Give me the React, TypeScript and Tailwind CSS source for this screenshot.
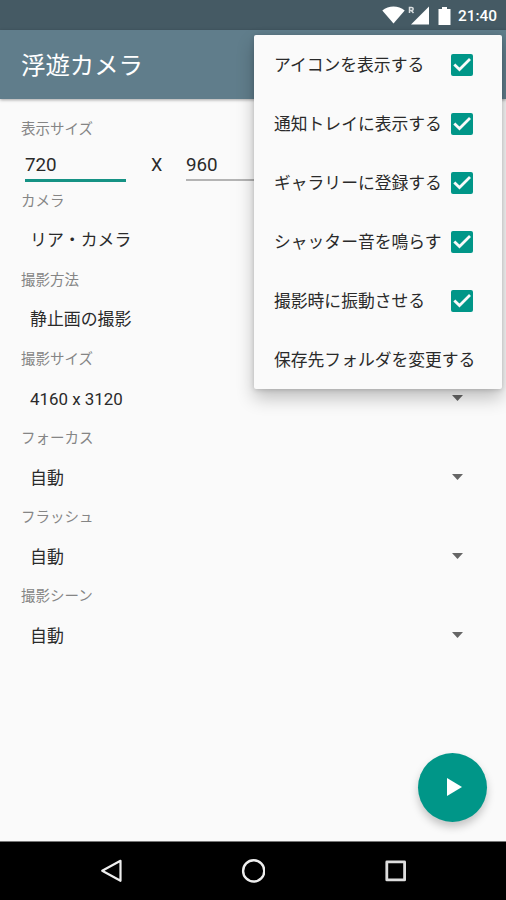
import React, { useState } from 'react';

const initialMenu = [
    { id: 'icon', label: 'アイコンを表示する', checked: true },
    { id: 'tray', label: '通知トレイに表示する', checked: true },
    { id: 'gallery', label: 'ギャラリーに登録する', checked: true },
    { id: 'shutter', label: 'シャッター音を鳴らす', checked: true },
    { id: 'vibrate', label: '撮影時に振動させる', checked: true },
];

const fields = [
    { label: 'カメラ', value: 'リア・カメラ' },
    { label: '撮影方法', value: '静止画の撮影' },
    { label: '撮影サイズ', value: '4160 x 3120' },
    { label: 'フォーカス', value: '自動' },
    { label: 'フラッシュ', value: '自動' },
    { label: '撮影シーン', value: '自動' },
];

function StatusBar() {
    return (
        <div className="flex h-[30px] items-center justify-end bg-[#455a64] pr-[9px] text-white">
            <svg className="h-[18px] w-[23px]" viewBox="0 0 23 18" fill="currentColor">
                <path d="M0.3 4.4C6.5-0.8 16.5-0.8 22.7 4.4L11.5 17.6Z" />
            </svg>
            <svg className="ml-[3px] h-[19px] w-[22px]" viewBox="0 0 22 19" fill="currentColor">
                <path d="M21 0.5V18.5H3Z" />
                <path d="M1.5 7V1.5H3.5Q5.2 1.5 5.2 3Q5.2 4.5 3.5 4.5H1.5M3.3 4.5L5.5 7" fill="none" stroke="currentColor" strokeWidth="1.5" opacity=".8" />
            </svg>
            <svg className="ml-[8px] mt-px h-[18px] w-[13px]" viewBox="0 0 13 18" fill="currentColor">
                <path d="M4 0H9V2H12.5V18H0.5V2H4Z" />
            </svg>
            <span className="ml-[7px] mt-[3px] text-[15.4px] leading-none font-medium">21:40</span>
        </div>
    );
}

function CheckBox({ checked }: { checked: boolean }) {
    if (!checked) {
        return <span className="h-[22px] w-[22px] rounded-[2px] border-2 border-[#757575]" />;
    }
    return (
        <span className="h-[22px] w-[22px] rounded-[2px] bg-[#009688]">
            <svg className="h-full w-full" viewBox="0 0 22 22" fill="none" stroke="#fafafa" strokeWidth="2.8">
                <path d="M3.3 10.4L8.5 15.6L19 5.1" />
            </svg>
        </span>
    );
}

function NavBar() {
    return (
        <div className="flex h-[59px] items-center justify-between border-t border-[#777] bg-black px-[100px]">
            <svg className="h-6 w-6" viewBox="0 0 24 24" fill="none" stroke="#eee" strokeWidth="2.2" strokeLinejoin="round">
                <path d="M20.5 1.8V21.8L2.2 11.8Z" />
            </svg>
            <svg className="h-6 w-6" viewBox="0 0 24 24" fill="none" stroke="#eee" strokeWidth="2.4">
                <circle cx="12.7" cy="11.9" r="10.6" />
            </svg>
            <svg className="h-6 w-6" viewBox="0 0 24 24" fill="none" stroke="#ddd" strokeWidth="2.8" strokeLinejoin="round">
                <rect x="4.8" y="2.9" width="17.8" height="18" />
            </svg>
        </div>
    );
}

export default function App() {
    const [width, setWidth] = useState('720');
    const [height, setHeight] = useState('960');
    const [menu, setMenu] = useState(initialMenu);

    const toggle = (id: string) => {
        setMenu(menu.map(m => (m.id === id ? { ...m, checked: !m.checked } : m)));
    };

    return (
        <div className="relative flex h-[900px] w-[506px] flex-col overflow-hidden bg-[#fafafa] font-[Roboto,'Noto_Sans_CJK_JP',sans-serif] text-[#2a2a2a]">
            <StatusBar />
            <header className="flex h-[69px] items-center bg-[#607d8b] pt-[3px] pl-[21px] text-white shadow-[0_1px_3px_rgba(0,0,0,0.35)]">
                <h1 className="text-[24.4px] leading-none">浮遊カメラ</h1>
            </header>

            <main className="flex-1">
                {/* Preview size */}
                <div className="h-[93px] pt-[21px] pl-[21px]">
                    <div className="h-5 text-[14.5px] leading-5 text-[#858585]">表示サイズ</div>
                    <div className="flex pl-1 text-[18.8px] leading-[22px]">
                        <input
                            value={width}
                            onChange={e => setWidth(e.target.value)}
                            className="mt-[14px] h-[28px] w-[101px] border-b-[3px] border-[#159284] pb-[3px] outline-none"
                        />
                        <span className="mt-[14px] ml-[25px] w-[35px] text-[18px]">X</span>
                        <input
                            value={height}
                            onChange={e => setHeight(e.target.value)}
                            className="mt-[14px] h-[27px] w-[101px] border-b-2 border-[#b4b4b4] pb-[4px] outline-none"
                        />
                    </div>
                </div>

                {fields.map(f => (
                    <div key={f.label} className="h-[79.1px] pr-[43px] pl-[21px]">
                        <div className="h-5 text-[14.5px] leading-5 text-[#858585]">{f.label}</div>
                        <div className="flex h-[58px] items-center justify-between pl-[9px] text-[16.9px]">
                            <span>{f.value}</span>
                            <svg className="mb-[2px] h-[6px] w-[11px]" viewBox="0 0 11 6" fill="#666">
                                <path d="M0 0H11L5.5 6Z" />
                            </svg>
                        </div>
                    </div>
                ))}
            </main>

            <NavBar />

            {/* Start button */}
            <button
                type="button"
                className="absolute top-[753px] left-[418px] flex h-[69px] w-[69px] items-center justify-center rounded-full bg-[#009688] shadow-[0_5px_9px_rgba(0,0,0,0.22)]"
            >
                <svg className="mb-px ml-[4px] h-[18px] w-[15px]" viewBox="0 0 15 18" fill="#fff">
                    <path d="M0 0L15 9L0 18Z" />
                </svg>
            </button>

            {/* Overflow menu */}
            <div className="absolute top-[35px] left-[254px] w-[248px] rounded-[2px] bg-[#fafafa] text-[16.8px] shadow-[0_9px_18px_rgba(0,0,0,0.24),0_1px_5px_rgba(0,0,0,0.16)]">
                {menu.map(m => (
                    <button
                        key={m.id}
                        type="button"
                        onClick={() => toggle(m.id)}
                        className="flex h-[59px] w-full items-center justify-between pr-[29px] pl-[20px]"
                    >
                        <span className="pt-[2px]">{m.label}</span>
                        <CheckBox checked={m.checked} />
                    </button>
                ))}
                <button type="button" className="flex h-[59px] w-full items-center pt-[2px] pl-[20px]">保存先フォルダを変更する</button>
            </div>
        </div>
    );
}
